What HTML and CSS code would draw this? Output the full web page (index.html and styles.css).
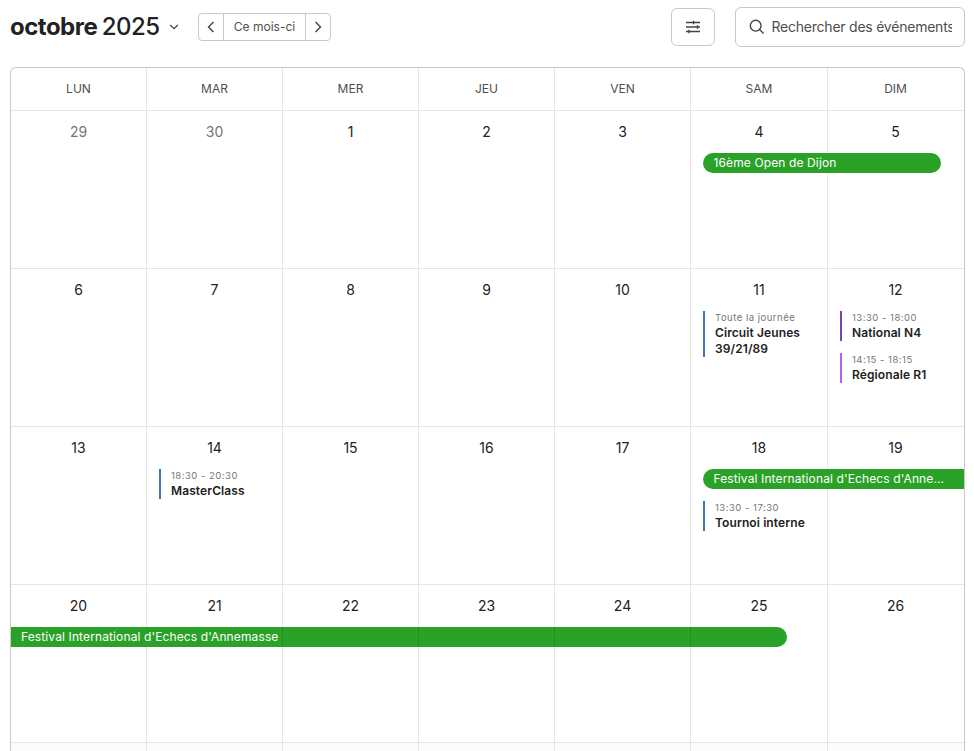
FILE: index.html
```html
<!DOCTYPE html>
<html lang="fr">
<head>
<meta charset="utf-8">
<title>Calendrier – octobre 2025</title>
<link rel="stylesheet" href="styles.css">
</head>
<body>
<header class="toolbar">
  <h1 class="title"><strong>octobre</strong> <span>2025</span></h1>
  <svg class="caret" viewBox="0 0 10 6"><path d="M1.2 1l3.8 3.7L8.8 1"/></svg>
  <nav class="pager">
    <button class="step"><svg viewBox="0 0 8 12"><path d="M6.5 1L1.5 6l5 5"/></svg></button>
    <button class="today">Ce mois-ci</button>
    <button class="step"><svg viewBox="0 0 8 12"><path d="M1.5 1l5 5-5 5"/></svg></button>
  </nav>
  <button class="filter"><svg viewBox="0 0 16 14"><path d="M1 2.5h14M1 7h14M1 11.5h14M8.5 .8v3.4M12.5 5.3v3.4M4 9.8v3.4"/></svg></button>
  <label class="search">
    <svg viewBox="0 0 16 16"><circle cx="6.7" cy="6.7" r="5.4"/><path d="M10.6 10.6l4 4"/></svg>
    <span class="placeholder">Rechercher des événements</span>
  </label>
</header>
<main class="calendar">
  <div class="row days">
    <div>LUN</div><div>MAR</div><div>MER</div><div>JEU</div><div>VEN</div><div>SAM</div><div>DIM</div>
  </div>
  <div class="row week">
    <div class="cell muted"><b>29</b></div>
    <div class="cell muted"><b>30</b></div>
    <div class="cell"><b>1</b></div>
    <div class="cell"><b>2</b></div>
    <div class="cell"><b>3</b></div>
    <div class="cell"><b>4</b></div>
    <div class="cell"><b>5</b></div>
    <div class="bar weekend">16ème Open de Dijon</div>
  </div>
  <div class="row week">
    <div class="cell"><b>6</b></div>
    <div class="cell"><b>7</b></div>
    <div class="cell"><b>8</b></div>
    <div class="cell"><b>9</b></div>
    <div class="cell"><b>10</b></div>
    <div class="cell"><b>11</b>
      <article class="event blue"><time>Toute la journée</time><p>Circuit Jeunes 39/21/89</p></article>
    </div>
    <div class="cell"><b>12</b>
      <article class="event purple"><time>13:30 - 18:00</time><p>National N4</p></article>
      <article class="event violet"><time>14:15 - 18:15</time><p>Régionale R1</p></article>
    </div>
  </div>
  <div class="row week">
    <div class="cell"><b>13</b></div>
    <div class="cell"><b>14</b>
      <article class="event blue"><time>18:30 - 20:30</time><p>MasterClass</p></article>
    </div>
    <div class="cell"><b>15</b></div>
    <div class="cell"><b>16</b></div>
    <div class="cell"><b>17</b></div>
    <div class="cell"><b>18</b>
      <article class="event blue below-bar"><time>13:30 - 17:30</time><p>Tournoi interne</p></article>
    </div>
    <div class="cell"><b>19</b></div>
    <div class="bar weekend continues">Festival International d'Echecs d'Anne...</div>
  </div>
  <div class="row week">
    <div class="cell"><b>20</b></div>
    <div class="cell"><b>21</b></div>
    <div class="cell"><b>22</b></div>
    <div class="cell"><b>23</b></div>
    <div class="cell"><b>24</b></div>
    <div class="cell"><b>25</b></div>
    <div class="cell"><b>26</b></div>
    <div class="bar continued">Festival International d'Echecs d'Annemasse</div>
    <i class="seam s2"></i><i class="seam s3"></i><i class="seam s4"></i><i class="seam s5"></i>
  </div>
  <div class="row last">
    <div></div><div></div><div></div><div></div><div></div><div></div><div></div>
  </div>
</main>
</body>
</html>
```

FILE: styles.css
```css
* { box-sizing: border-box; }

body {
  margin: 0;
  height: 751px;
  overflow: hidden;
  padding: 7px 9px 0 10px;
  background: #fff;
  color: #222;
  font-family: Inter, "Liberation Sans", sans-serif;
}

button {
  display: flex;
  align-items: center;
  justify-content: center;
  padding: 0;
  border: 0;
  background: none;
  color: #4e4e4e;
  font: inherit;
}

svg {
  flex: none;
  fill: none;
  stroke: #444;
  stroke-width: 1.4;
}

.toolbar {
  display: flex;
  align-items: center;
  height: 40px;
}

.title {
  margin: 0;
  width: 150px;
  font-size: 24px;
  line-height: 32px;
  font-weight: 500;
  letter-spacing: -.5px;
  word-spacing: -1.5px;
  white-space: nowrap;
}

.title strong { font-weight: 700; }

.caret {
  width: 10px;
  height: 6px;
  margin-left: 8.5px;
  stroke-width: 1.2;
}

.pager {
  display: flex;
  width: 133px;
  height: 28px;
  margin-left: 19.5px;
  border: 1px solid #c8c8c8;
  border-radius: 4px;
}

.step { width: 24px; }
.step svg { width: 8px; height: 12px; }

.today {
  flex: 1;
  border: solid #c8c8c8;
  border-width: 0 1px;
  padding-bottom: 1px;
  font-size: 12px;
}

.filter {
  width: 44px;
  height: 38px;
  margin-left: auto;
  border: 1px solid #c8c8c8;
  border-radius: 6px;
}

.filter svg { width: 16px; height: 14px; }

.search {
  display: flex;
  align-items: center;
  width: 230px;
  height: 40px;
  margin-left: 20px;
  padding: 0 12px 0 13px;
  border: 1px solid #c8c8c8;
  border-radius: 6px;
  color: #4e4e4e;
}

.search svg { width: 16px; height: 16px; margin-right: 6.5px; }

.placeholder {
  flex: 1;
  overflow: hidden;
  white-space: nowrap;
  font-size: 14px;
  line-height: 20px;
  letter-spacing: -.23px;
}

.calendar {
  margin-top: 20px;
  border: 1px solid #c8c8c8;
  border-bottom: 0;
  border-radius: 6px 6px 0 0;
  overflow: hidden;
}

.row {
  display: grid;
  grid-template-columns: repeat(5, 136px) 137px 136px;
  border-bottom: 1px solid #e6e6e6;
}

.row > div:not(.bar) { border-right: 1px solid #e6e6e6; }
.row > div:nth-child(7) { border-right-color: transparent !important; }

.days {
  height: 43px;
  font-size: 12px;
  line-height: 42px;
  text-align: center;
  color: #4e4e4e;
}

.week {
  grid-template-rows: 42px 20px 95px;
  height: 158px;
}

.cell { grid-row: 1 / 4; }

.cell:nth-child(1) { grid-column: 1; }
.cell:nth-child(2) { grid-column: 2; }
.cell:nth-child(3) { grid-column: 3; }
.cell:nth-child(4) { grid-column: 4; }
.cell:nth-child(5) { grid-column: 5; }
.cell:nth-child(6) { grid-column: 6; }
.cell:nth-child(7) { grid-column: 7; }

.cell b {
  display: block;
  height: 42px;
  font-size: 14px;
  line-height: 42px;
  font-weight: 400;
  text-align: center;
}

.muted { color: #767676; }

.event {
  margin: 0 12px 12px;
  padding-left: 10px;
  border-left: 2px solid;
}

.event.below-bar { margin-top: 32px; }

.event time {
  display: block;
  height: 14px;
  font-size: 9.5px;
  line-height: 13px;
  letter-spacing: .5px;
  color: #767676;
  white-space: nowrap;
}

.event p {
  margin: 0;
  font-size: 12px;
  line-height: 16px;
  font-weight: 600;
  letter-spacing: .1px;
  color: #222;
}

.blue { border-color: #4175b4; }
.purple { border-color: #7645b1; }
.violet { border-color: #b665ea; }

.bar {
  grid-row: 2;
  height: 20px;
  padding: 0 10px;
  overflow: hidden;
  background: #2aa127;
  color: #fff;
  font-size: 12px;
  line-height: 20px;
  font-weight: 400;
  letter-spacing: .12px;
  white-space: nowrap;
}

.weekend {
  grid-column: 6 / 8;
  margin: 0 23px 0 12px;
  padding-left: 10.5px;
  border-radius: 10px;
}

.continues {
  margin-right: 0;
  border-radius: 10px 0 0 10px;
}

.continued {
  grid-column: 1 / 7;
  margin-right: 41px;
  border-radius: 0 10px 10px 0;
}

.seam {
  grid-row: 2;
  justify-self: end;
  width: 1px;
  background: #25901f;
}

.s2 { grid-column: 2; }
.s3 { grid-column: 3; }
.s4 { grid-column: 4; }
.s5 { grid-column: 5; }

.last {
  height: 8px;
  border-bottom: 0;
  background: #fcfcfc;
}
```
